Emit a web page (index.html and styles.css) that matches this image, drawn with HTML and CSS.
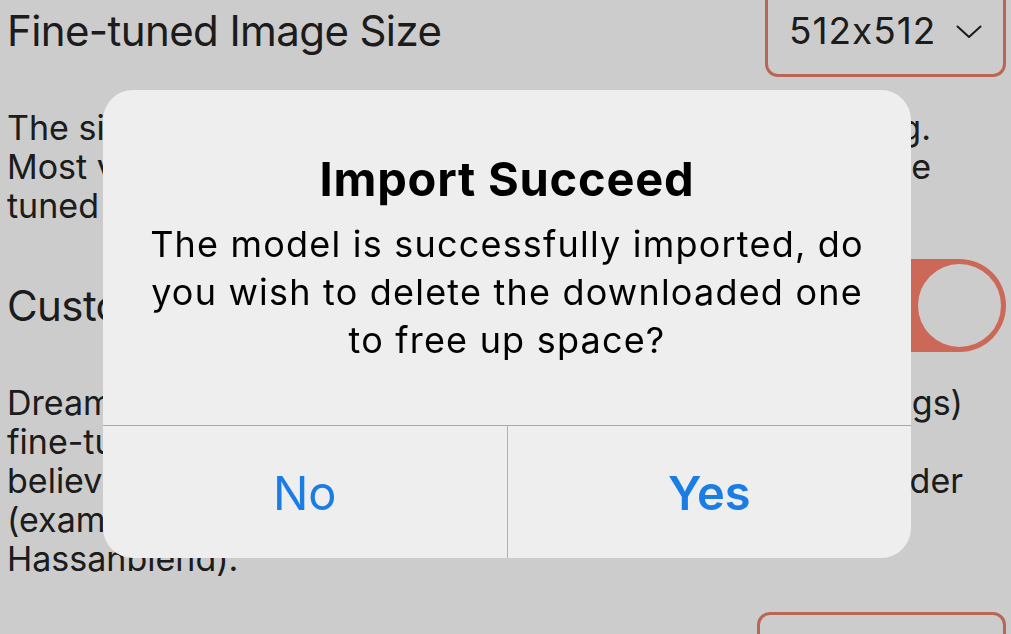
FILE: index.html
```html
<!DOCTYPE html>
<html lang="en">
    <head>
        <meta charset="UTF-8">
        <meta name="viewport" content="width=device-width, initial-scale=1.0">
        <link rel="stylesheet" href="styles.css">
        <title>Import Model</title>
    </head>
    <body>
        <!--======================= 設定画面 (アラートの後ろ) =======================-->
        <div class="settings">
            <div class="row">
                <div class="rowLabel">Fine-tuned Image Size</div>
                <div class="picker">
                    <span>512x512</span>
                    <svg class="chevron" width="26" height="14" viewBox="0 0 26 14">
                        <polyline points="1.5,1.5 13,12 24.5,1.5" fill="none" stroke="#222" stroke-width="2" stroke-linecap="round" stroke-linejoin="round"/>
                    </svg>
                </div>
            </div>

            <p class="note first">
                <span class="line full"><span>The size of images</span><span>used in fine-tuning.</span></span>
                <span class="line full"><span>Most v1.x models use</span><span>512x512 unless you change the</span></span>
                <span class="line">tuned resolution.</span>
            </p>

            <div class="row">
                <div class="rowLabel">Custom Text Encoder</div>
                <div class="toggle on"><div class="knob"></div></div>
            </div>

            <p class="note dream">
                <span class="line full"><span>DreamBooth models can</span><span>include text (embeddings)</span></span>
                <span class="line">fine-tuned. Enable this if you</span>
                <span class="line full"><span>believe it has a fine-tuned</span><span>text encoder</span></span>
                <span class="line">(example: Anything v3, F222,</span>
                <span class="line">Hassanblend).</span>
            </p>

            <div class="row end">
                <div class="picker wide"><span>Import</span></div>
            </div>
        </div>

        <!--======================= アラート =======================-->
        <div class="backdrop"></div>
        <div class="alert">
            <div class="alertBody">
                <div class="alertTitle">Import Succeed</div>
                <div class="alertMessage">The model is successfully imported, do you wish to delete the downloaded one to free up space?</div>
            </div>
            <div class="alertButtons">
                <div class="alertButton">No</div>
                <div class="alertButton primary">Yes</div>
            </div>
        </div>
    </body>
</html>
```

FILE: styles.css
```css
body{
    margin: 0;
    height: 634px;
    overflow: hidden;
    background-color: #ffffff;
    color: #242424;
    font-family: Inter, "Noto Sans", sans-serif;
    font-feature-settings: "calt" 0;
}

/*************************************************************************************************/

/* 設定画面 */
.settings{
    margin-top: -16px;
    padding: 0 5px 0 7px;
}

.row{
    display: flex;
    justify-content: space-between;
    align-items: center;
}

.row.end{
    justify-content: flex-end;
}

.rowLabel{
    font-size: 42px;
    letter-spacing: -0.6px;
}

.picker{
    display: flex;
    align-items: center;
    justify-content: space-between;
    box-sizing: border-box;
    width: 241px;
    height: 93px;
    padding: 0 21px 0 21px;
    border: solid 3px #e8806d;
    border-radius: 13px;
    font-size: 37px;
    letter-spacing: 1px;
}

.picker.wide{
    width: 249px;
    justify-content: center;
}

.chevron{
    margin-top: 2px;
}

.note{
    margin: 31px 0 34px;
    font-size: 34px;
    line-height: 39px;
}

.note.first{
    width: 924px;
}

.note.dream{
    width: 956px;
}

/* 1行ずつ: 左右の端を揃える行は flex で両端に寄せる */
.line{
    display: block;
}

.line.full{
    display: flex;
    justify-content: space-between;
}

/* トグル */
.toggle{
    position: relative;
    width: 152px;
    height: 93px;
    border-radius: 47px;
    background-color: #ff836e;
}

.knob{
    position: absolute;
    top: 5px;
    right: 5px;
    width: 83px;
    height: 83px;
    border-radius: 50%;
    background-color: #ffffff;
}

/*************************************************************************************************/

/* アラート */
.backdrop{
    position: fixed;
    inset: 0;
    background-color: rgba(0, 0, 0, 0.2);
}

.alert{
    position: absolute;
    left: 103px;
    top: 90px;
    width: 808px;
    height: 468px;
    display: flex;
    flex-direction: column;
    border-radius: 30px;
    background-color: #eeeeee;
    overflow: hidden;
    text-align: center;
    color: #000000;
}

.alertBody{
    height: 336px;
    padding: 61px 40px 0;
    box-sizing: border-box;
    border-bottom: solid 1px #a8a8a8;
}

.alertTitle{
    font-size: 47px;
    line-height: 56px;
    font-weight: 700;
    letter-spacing: 0.8px;
}

.alertMessage{
    margin-top: 13px;
    font-size: 36px;
    line-height: 48px;
    letter-spacing: 1.2px;
}

.alertButtons{
    flex: 1;
    display: flex;
}

.alertButton{
    flex: 1;
    display: flex;
    align-items: center;
    justify-content: center;
    font-size: 47px;
    color: #1a7de6;
    cursor: pointer;
}

.alertButton + .alertButton{
    border-left: solid 1px #b0b0b0;
}

.alertButton.primary{
    font-weight: 600;
}
```
